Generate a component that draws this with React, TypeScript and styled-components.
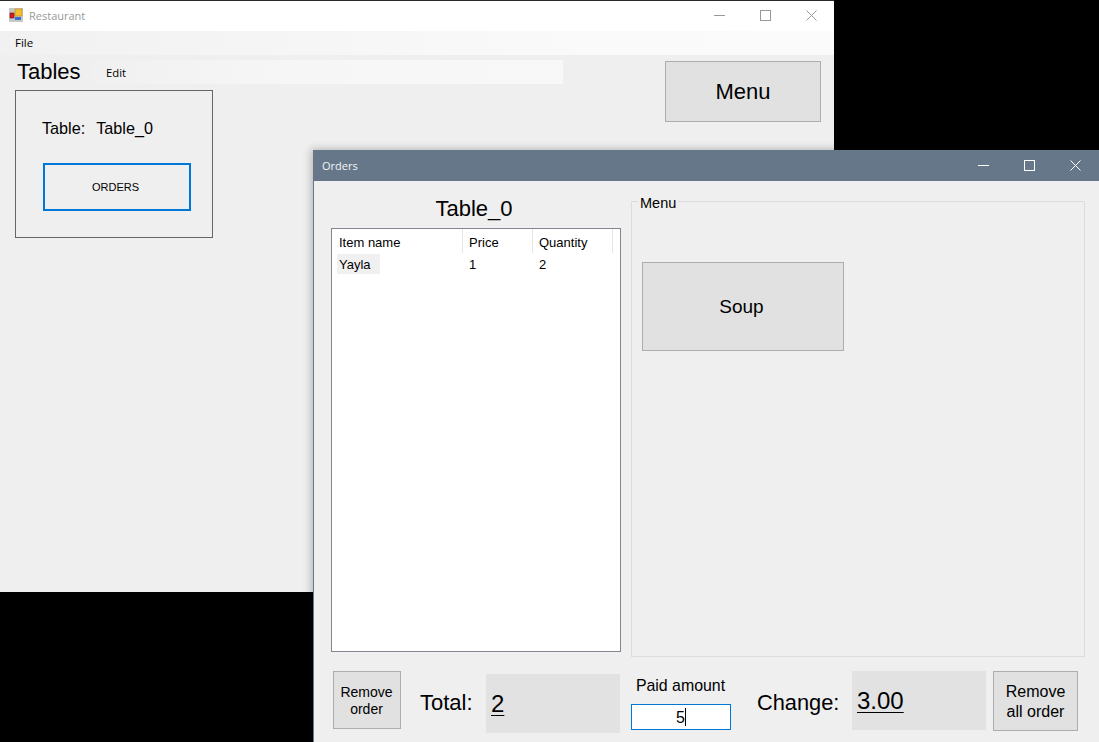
import React from "react";
import styled, { createGlobalStyle } from "styled-components";

const Global = createGlobalStyle`
  html, body {
    margin: 0;
    padding: 0;
    background: #000;
    overflow: hidden;
  }
  * {
    box-sizing: border-box;
  }
  #root {
    font-family: "Liberation Sans", Arial, sans-serif;
    color: #000;
  }
`;

const Desktop = styled.div`
  position: relative;
  width: 1099px;
  height: 742px;
  overflow: hidden;
  background: #000;
`;

const MainWindow = styled.div`
  position: absolute;
  left: 0;
  top: 0;
  width: 834px;
  height: 592px;
  display: flex;
  flex-direction: column;
  background: #efefef;
  border-top: 1px solid #2b2b2b;
`;

const OrdersWindow = styled.div`
  position: absolute;
  left: 313px;
  top: 150px;
  width: 786px;
  height: 592px;
  display: flex;
  flex-direction: column;
  background: #efefef;
  border-left: 1px solid #67778a;
  border-top: 1px solid #67778a;
  box-shadow: -2px -1px 8px rgba(0, 0, 0, 0.24);
`;

const TitleBar = styled.div<{ $active?: boolean }>`
  height: 30px;
  flex: none;
  display: flex;
  align-items: center;
  background: ${(p) => (p.$active ? "#67778a" : "#ffffff")};
  color: ${(p) => (p.$active ? "#f2f4f6" : "#9a9a9a")};
  font-family: "Open Sans", "Noto Sans", sans-serif;
  font-size: 11px;
  padding: ${(p) => (p.$active ? "0 1px 2px 8px" : "0 0 2px 9px")};
`;

const AppIcon = styled.svg`
  width: 14px;
  height: 14px;
  margin-right: 6px;
  flex: none;
`;

const TitleText = styled.span`
  flex: 1;
`;

const Controls = styled.div`
  display: flex;
  height: 100%;
`;

const ControlButton = styled.div`
  width: 46px;
  height: 100%;
  display: flex;
  align-items: center;
  justify-content: center;
`;

const ControlIcon = styled.svg<{ $active?: boolean }>`
  width: 11px;
  height: 11px;
  fill: none;
  stroke: ${(p) => (p.$active ? "#ffffff" : "#999999")};
  stroke-width: 1;
  shape-rendering: crispEdges;
`;

const CloseIcon = styled(ControlIcon)`
  shape-rendering: auto;
`;

const MenuStrip = styled.div`
  height: 24px;
  flex: none;
  display: flex;
  align-items: center;
  padding: 0 0 2px 15px;
  background: linear-gradient(to right, #f1f1f1, #fafafa 70%, #fbfbfb);
  font-family: "Open Sans", "Noto Sans", sans-serif;
  font-size: 11.5px;
`;

const MainBody = styled.div`
  flex: 1;
  padding: 5px 13px 0 15px;
  display: grid;
  grid-template-columns: 650px 156px;
  justify-content: space-between;
  align-items: start;
`;

const LeftColumn = styled.div`
  display: flex;
  flex-direction: column;
`;

const HeaderRow = styled.div`
  display: flex;
  align-items: center;
  height: 24px;
`;

const PageTitle = styled.h1`
  margin: 0 0 1px;
  padding-left: 2px;
  width: 77px;
  font-size: 22px;
  font-weight: 400;
`;

const ToolStrip = styled.div`
  width: 471px;
  height: 24px;
  display: flex;
  align-items: center;
  padding-left: 14px;
  background: linear-gradient(to right, #f0f0f0, #f6f6f6 40%, #f8f8f8);
  font-family: "Open Sans", "Noto Sans", sans-serif;
  font-size: 11.3px;
`;

const TableCard = styled.div`
  width: 198px;
  height: 148px;
  margin-top: 6px;
  padding: 28px 21px 0 26px;
  border: 1px solid #666666;
  display: flex;
  flex-direction: column;
`;

const TableLine = styled.div`
  display: flex;
  gap: 11px;
  font-size: 16.2px;
  line-height: 18px;
`;

const OrdersButton = styled.button`
  margin-top: 26px;
  margin-left: 1px;
  width: 148px;
  height: 48px;
  background: #efefef;
  border: 2px solid #0078d7;
  font-family: "Liberation Sans", Arial, sans-serif;
  font-size: 11px;
  padding: 0 3px 0 0;
`;

const FlatButton = styled.button<{ $size?: number }>`
  background: #e1e1e1;
  border: 1px solid #adadad;
  font-family: "Liberation Sans", Arial, sans-serif;
  font-size: ${(p) => p.$size ?? 14}px;
  line-height: 17px;
  padding: 0;
  color: #000;
`;

const MenuButton = styled(FlatButton)`
  width: 156px;
  height: 61px;
  margin-top: 1px;
  padding-top: 1px;
  line-height: 1.2;
`;

const OrdersBody = styled.div`
  flex: 1;
  display: flex;
  flex-direction: column;
  padding: 20px 14px 0 17px;
`;

const TopArea = styled.div`
  display: flex;
  gap: 10px;
  height: 456px;
`;

const OrderColumn = styled.div`
  width: 290px;
  flex: none;
  display: flex;
  flex-direction: column;
`;

const OrderTitle = styled.div`
  height: 27px;
  padding: 1px 4px 0 0;
  text-align: center;
  font-size: 22px;
  line-height: 14px;
`;

const ListView = styled.div`
  height: 424px;
  background: #fff;
  border: 1px solid #828790;
  font-size: 13px;
`;

const ListRow = styled.div`
  display: grid;
  grid-template-columns: 131px 70px 80px;
  height: 22px;
  align-items: center;
`;

const ListHeader = styled(ListRow)`
  height: 24px;
`;

const HeaderCell = styled.div`
  height: 24px;
  padding-left: 7px;
  line-height: 27px;
  border-right: 1px solid #e5e5e5;
  & + & {
    padding-left: 6px;
  }
`;

const ListCell = styled.div`
  padding-left: 7px;
  & + & {
    padding-left: 6px;
  }
`;

const SelectedName = styled.span`
  display: block;
  width: 43px;
  margin-left: -2px;
  padding: 2px 0 0 2px;
  background: #f0f0f0;
  line-height: 18px;
`;

const MenuGroup = styled.div`
  width: 454px;
  height: 456px;
  flex: none;
  padding: 60px 0 0 10px;
  position: relative;
  border: 1px solid #dcdcdc;
`;

const GroupLabel = styled.span`
  position: absolute;
  left: 6px;
  top: -7px;
  padding: 0 2px;
  background: #efefef;
  font-size: 14.5px;
`;

const SoupButton = styled(FlatButton)`
  width: 202px;
  height: 89px;
  display: block;
  padding: 2px 3px 0 0;
  line-height: 1.2;
`;

const BottomBar = styled.div`
  display: flex;
  align-items: flex-start;
  margin-top: 9px;
  padding-left: 2px;
`;

const RemoveButton = styled(FlatButton)`
  width: 68px;
  height: 58px;
  margin-top: 5px;
  padding: 2px 1px 0 0;
`;

const BottomLabel = styled.div<{ $width: number; $left: number; $size: number }>`
  width: ${(p) => p.$width}px;
  margin-left: ${(p) => p.$left}px;
  font-size: ${(p) => p.$size}px;
  margin-top: 25px;
  line-height: 24px;
`;

const ValueBox = styled.div<{ $width: number; $top: number }>`
  width: ${(p) => p.$width}px;
  height: 59px;
  margin-top: ${(p) => p.$top}px;
  padding: 15px 0 0 5px;
  background: #e2e2e2;
  font-size: 24px;
  line-height: 30px;
`;

const ValueText = styled.span`
  text-decoration: underline;
  text-decoration-thickness: 1px;
  text-underline-offset: 3px;
`;

const PaidColumn = styled.div`
  width: 100px;
  margin-left: 11px;
  margin-top: 11px;
  display: flex;
  flex-direction: column;
  align-items: center;
`;

const PaidLabel = styled.div`
  font-size: 15.9px;
  line-height: 18px;
  height: 27px;
  padding-right: 1px;
  white-space: nowrap;
`;

const PaidInput = styled.div`
  width: 100px;
  height: 26px;
  background: #fff;
  border: 1px solid #0078d7;
  font-size: 16px;
  line-height: 25px;
  display: flex;
  justify-content: center;
`;

const Caret = styled.span`
  width: 1px;
  height: 18px;
  margin-top: 3px;
  background: #000;
`;

const RemoveAllButton = styled(FlatButton)`
  width: 85px;
  height: 60px;
  margin-top: 5px;
  margin-left: 7px;
  padding-top: 1px;
  line-height: 20px;
`;

function WindowControls({ active }: { active?: boolean }) {
  return (
    <Controls>
      <ControlButton>
        <ControlIcon $active={active} viewBox="0 0 11 11">
          <path d="M0 5.5h11" />
        </ControlIcon>
      </ControlButton>
      <ControlButton>
        <ControlIcon $active={active} viewBox="0 0 11 11">
          <rect x="0.5" y="0.5" width="10" height="10" />
        </ControlIcon>
      </ControlButton>
      <ControlButton>
        <CloseIcon $active={active} viewBox="0 0 11 11">
          <path d="M0.5 0.5l10 10M10.5 0.5l-10 10" />
        </CloseIcon>
      </ControlButton>
    </Controls>
  );
}

export default function App() {
  return (
    <Desktop>
      <Global />
      <MainWindow>
        <TitleBar>
          <AppIcon viewBox="0 0 14 14">
            <rect x="0" y="0" width="14" height="14" fill="#c8c8c8" />
            <rect x="6" y="1" width="7" height="7" fill="#f5c030" stroke="#b8860b" strokeWidth="0.6" />
            <rect x="1" y="5" width="4" height="5" fill="#d02020" stroke="#801010" strokeWidth="0.6" />
            <rect x="6" y="9" width="6" height="3" fill="#3a70d0" />
          </AppIcon>
          <TitleText>Restaurant</TitleText>
          <WindowControls />
        </TitleBar>
        <MenuStrip>File</MenuStrip>
        <MainBody>
          <LeftColumn>
            <HeaderRow>
              <PageTitle>Tables</PageTitle>
              <ToolStrip>Edit</ToolStrip>
            </HeaderRow>
            <TableCard>
              <TableLine>
                <span>Table:</span>
                <span>Table_0</span>
              </TableLine>
              <OrdersButton>ORDERS</OrdersButton>
            </TableCard>
          </LeftColumn>
          <MenuButton $size={22}>Menu</MenuButton>
        </MainBody>
      </MainWindow>

      <OrdersWindow>
        <TitleBar $active>
          <TitleText>Orders</TitleText>
          <WindowControls active />
        </TitleBar>
        <OrdersBody>
          <TopArea>
            <OrderColumn>
              <OrderTitle>Table_0</OrderTitle>
              <ListView>
                <ListHeader>
                  <HeaderCell>Item name</HeaderCell>
                  <HeaderCell>Price</HeaderCell>
                  <HeaderCell>Quantity</HeaderCell>
                </ListHeader>
                <ListRow>
                  <ListCell>
                    <SelectedName>Yayla</SelectedName>
                  </ListCell>
                  <ListCell>1</ListCell>
                  <ListCell>2</ListCell>
                </ListRow>
              </ListView>
            </OrderColumn>
            <MenuGroup>
              <GroupLabel>Menu</GroupLabel>
              <SoupButton $size={19}>Soup</SoupButton>
            </MenuGroup>
          </TopArea>
          <BottomBar>
            <RemoveButton>
              Remove
              <br />
              order
            </RemoveButton>
            <BottomLabel $width={66} $left={19} $size={22}>Total:</BottomLabel>
            <ValueBox $width={134} $top={8}>
              <ValueText>2</ValueText>
            </ValueBox>
            <PaidColumn>
              <PaidLabel>Paid amount</PaidLabel>
              <PaidInput>
                5<Caret />
              </PaidInput>
            </PaidColumn>
            <BottomLabel $width={95} $left={26} $size={21.8}>Change:</BottomLabel>
            <ValueBox $width={134} $top={5}>
              <ValueText>3.00</ValueText>
            </ValueBox>
            <RemoveAllButton $size={16}>
              Remove
              <br />
              all order
            </RemoveAllButton>
          </BottomBar>
        </OrdersBody>
      </OrdersWindow>
    </Desktop>
  );
}
